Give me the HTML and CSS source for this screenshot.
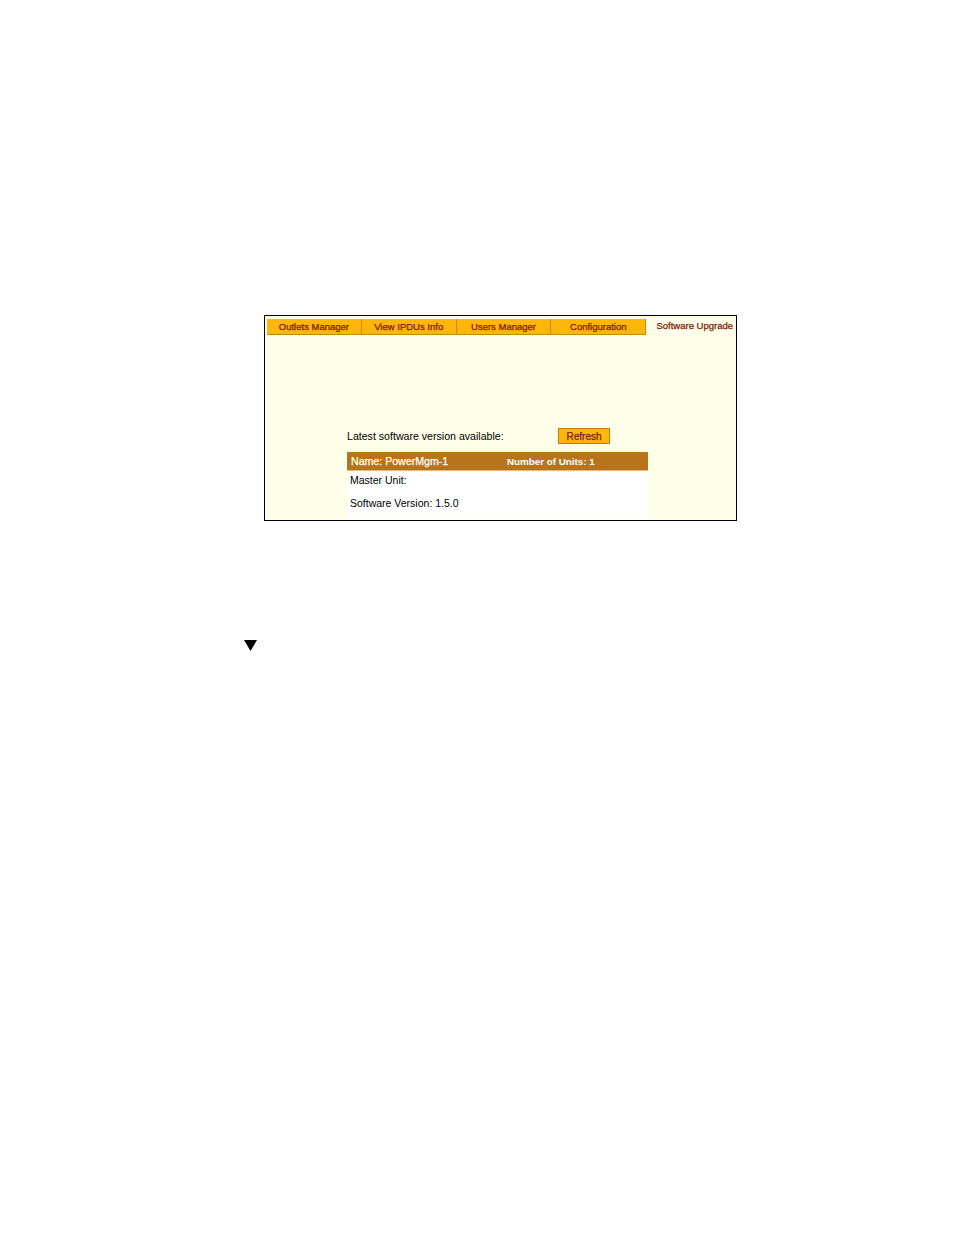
FILE: index.html
```html
<!DOCTYPE html>
<html>
<head>
<meta charset="utf-8">
<link rel="stylesheet" href="styles.css">
</head>
<body>
<div class="page">
  <div class="frame">
    <div class="tabs">
      <div class="tab">Outlets Manager</div>
      <div class="tab">View IPDUs Info</div>
      <div class="tab">Users Manager</div>
      <div class="tab">Configuration</div>
      <div class="tab active">Software Upgrade</div>
    </div>
    <div class="content">
      <div class="latest">
        <span class="latest-label">Latest software version available:</span>
        <span class="btn">Refresh</span>
      </div>
      <div class="unit">
        <div class="unit-head">
          <span class="name">Name: PowerMgm-1</span>
          <span class="count">Number of Units: 1</span>
        </div>
        <div class="unit-body">
          <div class="row">Master Unit:</div>
          <div class="row">Software Version: 1.5.0</div>
        </div>
      </div>
    </div>
  </div>
  <div class="marker">
    <svg width="13" height="11" viewBox="0 0 13 11"><polygon points="0,0 13,0 6.5,11" fill="#000"/></svg>
  </div>
</div>
</body>
</html>
```

FILE: styles.css
```css
html, body {
  margin: 0;
  padding: 0;
  background: #ffffff;
}
body {
  font-family: "Liberation Sans", Arial, sans-serif;
  color: #000;
}
.page {
  padding-top: 315px;
  padding-left: 264px;
}
.frame {
  width: 471px;
  height: 204px;
  border: 1px solid #000;
  background: #fffee8;
  padding: 0;
  box-sizing: content-box;
}
.tabs {
  display: flex;
  margin: 3px 0 0 2px;
  height: 16px;
}
.tab {
  width: 94px;
  height: 15px;
  background: #ffb60a;
  border-right: 1px solid #c98a00;
  border-bottom: 1px solid #c98a00;
  color: #7a1a05;
  font-size: 9.5px;
  -webkit-text-stroke: 0.25px #7a1a05;
  display: flex;
  align-items: center;
  justify-content: center;
  box-sizing: content-box;
}
.tab.active {
  width: 87px;
  padding-right: 3px;
  background: transparent;
  border: none;
  height: 15px;
  margin-top: -1px;
  justify-content: flex-end;
}
.content {
  padding: 93px 0 0 82px;
}
.latest {
  display: flex;
  align-items: center;
  height: 16px;
}
.latest-label {
  font-size: 10.6px;
  width: 211px;
}
.btn {
  width: 50px;
  height: 14px;
  border: 1px solid #c77a10;
  background: #ffb60a;
  color: #7a1a05;
  font-size: 10px;
  -webkit-text-stroke: 0.25px #7a1a05;
  display: flex;
  align-items: center;
  justify-content: center;
}
.unit {
  width: 301px;
  margin-top: 8px;
}
.unit-head {
  height: 18px;
  background: #b7741b;
  border-bottom: 1px solid #e0b880;
  color: #fff;
  font-size: 9.8px;
  display: flex;
  align-items: center;
  padding-left: 4px;
}
.name {
  width: 156px;
  font-size: 10.6px;
  -webkit-text-stroke: 0.25px #fff;
}
.count {
  font-weight: bold;
}
.unit-body {
  background: #fff;
  padding: 0 0 7px 3px;
}
.row {
  font-size: 10.5px;
  height: 18px;
  display: flex;
  align-items: center;
}
.row + .row {
  margin-top: 5px;
}
.marker {
  margin: 119px 0 0 -20px;
  height: 11px;
  line-height: 0;
}
```
